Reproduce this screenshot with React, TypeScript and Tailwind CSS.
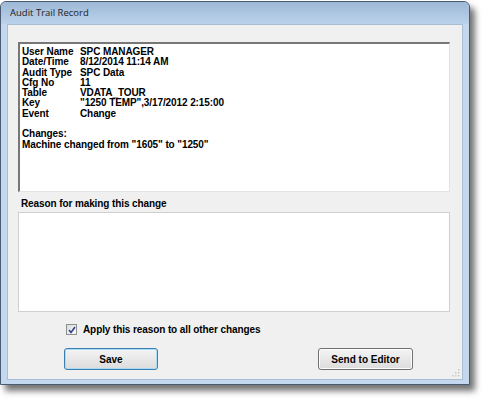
export default function App() {
  const fields = [
    ["User Name", "SPC MANAGER"],
    ["Date/Time", "8/12/2014 11:14 AM"],
    ["Audit Type", "SPC Data"],
    ["Cfg No", "11"],
    ["Table", "VDATA_TOUR"],
    ["Key", "\"1250 TEMP\",3/17/2012 2:15:00"],
    ["Event", "Change"],
  ];

  return (
    <div className="w-[485px] h-[399px] bg-white pt-px" style={{ fontFamily: '"Liberation Sans", Arial, sans-serif' }}>
      <div className="w-[470px] h-[384px] flex flex-col border border-[#4a5a70] rounded-t-[6px] bg-[#c3d7ee] shadow-[5px_6px_6px_rgba(0,0,0,0.55)]">
        {/* title bar */}
        <div className="h-[22px] flex items-center pl-[9px] pt-px rounded-t-[6px] bg-gradient-to-b from-[#9db8d6] to-[#bcd2eb]">
          <span className="text-[9.5px] text-[#1e1e1e]" style={{ fontFamily: '"Open Sans", "Noto Sans", sans-serif' }}>
            Audit Trail Record
          </span>
        </div>

        {/* client */}
        <div className="flex-1 mx-[6px] mb-[4px] bg-[#f0f0f0] border border-[#a9bdd3] flex flex-col pt-[17px] pl-[10px] pr-[12px] relative">
          <div className="h-[150px] bg-white border-t-2 border-l-2 border-t-[#777] border-l-[#777] border-r border-b border-r-[#e3e3e3] border-b-[#e3e3e3] px-[2px] pt-[3px] text-[10px] font-bold leading-[10.3px] text-black tracking-[-0.1px]">
            {fields.map(([k, v]) => (
              <div key={k} className="flex">
                <span className="w-[58px] shrink-0">{k}</span>
                <span>{v}</span>
              </div>
            ))}
            <div className="h-[10.3px]" />
            <div>Changes:</div>
            <div>Machine changed from "1605" to "1250"</div>
          </div>

          <div className="h-[20px] flex items-end pb-[1px] pl-[3px] text-[10px] font-bold text-black tracking-[-0.1px]">
            Reason for making this change
          </div>

          <div className="h-[100px] bg-white border border-[#cfcfcf]" />

          <div className="flex items-center gap-[6px] pl-[48px] mt-[10px]">
            <div className="w-[11px] h-[11px] border border-[#8e8f8f] bg-gradient-to-br from-[#dcdcdc] to-[#fbfbfb] flex items-center justify-center">
              <svg width="8" height="8" viewBox="0 0 8 8">
                <path d="M1 4 L3 6.5 L7 1" fill="none" stroke="#2a3f8c" strokeWidth="1.5" />
              </svg>
            </div>
            <span className="text-[10px] font-bold text-black tracking-[-0.1px]">Apply this reason to all other changes</span>
          </div>

          <div className="flex justify-between pl-[46px] pr-[37px] mt-[11px]">
            <button className="w-[94px] h-[22px] rounded-[3px] border border-[#3c7fb1] bg-gradient-to-b from-[#f4f4f4] to-[#dcdcdc] shadow-[inset_0_0_0_1px_#a8dcf5] text-[10px] font-bold text-black">
              Save
            </button>
            <button className="w-[95px] h-[22px] rounded-[3px] border border-[#707070] bg-gradient-to-b from-[#f4f4f4] to-[#dcdcdc] shadow-[inset_0_0_0_1px_#fcfcfc] text-[10px] font-bold text-black">
              Send to Editor
            </button>
          </div>

          {/* size grip */}
          <svg className="absolute right-[2px] bottom-[2px]" width="8" height="8" viewBox="0 0 8 8">
            <rect x="6" y="0" width="1.5" height="1.5" fill="#c8c8c8" />
            <rect x="3" y="3" width="1.5" height="1.5" fill="#c8c8c8" />
            <rect x="6" y="3" width="1.5" height="1.5" fill="#c8c8c8" />
            <rect x="0" y="6" width="1.5" height="1.5" fill="#c8c8c8" />
            <rect x="3" y="6" width="1.5" height="1.5" fill="#c8c8c8" />
            <rect x="6" y="6" width="1.5" height="1.5" fill="#c8c8c8" />
          </svg>
        </div>
      </div>
    </div>
  );
}
